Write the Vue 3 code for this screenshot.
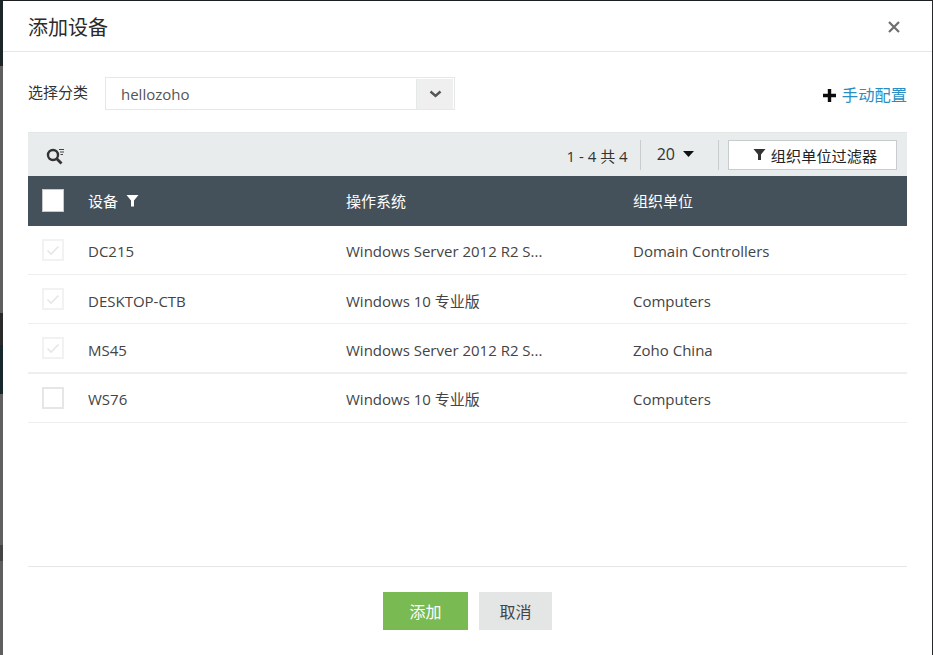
<script setup>
const rows = [
  { name: 'DC215', os: 'Windows Server 2012 R2 S...', ou: 'Domain Controllers', done: true, up: true },
  { name: 'DESKTOP-CTB', os: 'Windows 10 专业版', ou: 'Computers', done: true },
  { name: 'MS45', os: 'Windows Server 2012 R2 S...', ou: 'Zoho China', done: true, thick: true },
  { name: 'WS76', os: 'Windows 10 专业版', ou: 'Computers', done: false, up: true }
]
</script>

<template>
  <div class="page">
    <div class="strip"></div>
    <div class="modal">
      <header class="head">
        <h1>添加设备</h1>
        <svg class="close" width="12" height="12" viewBox="0 0 12 12"><path d="M1 1L11 11M11 1L1 11" stroke="#6e6e6e" stroke-width="2.2" fill="none"/></svg>
      </header>
      <div class="body">
        <div class="picker">
          <span class="label">选择分类</span>
          <div class="select">
            <span class="value">hellozoho</span>
            <span class="arrow">
              <svg width="13" height="8" viewBox="0 0 13 8"><path d="M1.5 1.5L6.5 6L11.5 1.5" stroke="#555" stroke-width="2.4" fill="none"/></svg>
            </span>
          </div>
          <a class="manual">
            <svg width="13" height="13" viewBox="0 0 13 13"><path d="M6.5 0V13M0 6.5H13" stroke="#0c0c0c" stroke-width="3.4"/></svg>
            <span>手动配置</span>
          </a>
        </div>
        <div class="toolbar">
          <svg class="search" width="19" height="18" viewBox="0 0 19 18">
            <circle cx="7" cy="8" r="5" fill="none" stroke="#333" stroke-width="2.4"/>
            <path d="M10.5 11.5L15.5 16.5" stroke="#333" stroke-width="2.8"/>
            <path d="M13 2.5H18M14 5H18M14.5 7.5H17" stroke="#444" stroke-width="1.2"/>
          </svg>
          <span class="count">1 - 4 共 4</span>
          <span class="sep"></span>
          <span class="size">20</span>
          <svg class="caret" width="11" height="6" viewBox="0 0 11 6"><path d="M0 0H11L5.5 6Z" fill="#111"/></svg>
          <span class="sep sep2"></span>
          <button class="filter">
            <svg width="13" height="13" viewBox="0 0 13 13"><path d="M0.5 1H12.5L8 6.5V12L5 12V6.5Z" fill="#333"/></svg>
            <span>组织单位过滤器</span>
          </button>
        </div>
        <div class="thead">
          <span class="c-check"><span class="hbox"></span></span>
          <span class="c-name">设备
            <svg width="13" height="13" viewBox="0 0 13 13"><path d="M0.5 1H12.5L8 6.5V12.5L5 12.5V6.5Z" fill="#fff"/></svg>
          </span>
          <span class="c-os">操作系统</span>
          <span class="c-ou">组织单位</span>
        </div>
        <div v-for="r in rows" :key="r.name" class="row" :class="{ thick: r.thick, up: r.up }">
          <span class="c-check">
            <span class="box" :class="{ done: r.done }">
              <svg v-if="r.done" width="14" height="11" viewBox="0 0 14 11"><path d="M1.5 5.5L5 9L12.5 1.5" stroke="#e6e6e6" stroke-width="1.6" fill="none"/></svg>
            </span>
          </span>
          <span class="c-name">{{ r.name }}</span>
          <span class="c-os">{{ r.os }}</span>
          <span class="c-ou">{{ r.ou }}</span>
        </div>
        <div class="spacer"></div>
        <footer class="foot">
          <button class="add">添加</button>
          <button class="cancel">取消</button>
        </footer>
      </div>
    </div>
    <div class="edge"></div>
  </div>
</template>

<style>
html, body { margin: 0; background: #fff; }
</style>

<style scoped>
.page {
  display: flex;
  width: 933px;
  height: 655px;
  overflow: hidden;
  font-family: "Open Sans", "Noto Sans CJK SC", sans-serif;
  color: #333;
  background: #1c1f22;
}
.strip {
  width: 3px;
  flex: none;
  margin-top: 1px;
  background: linear-gradient(to bottom, #1c2527 0 65px, #5f5f5f 65px 312px, #2a2a2a 312px 344px, #18272b 344px 393px, #606060 393px 544px, #444 544px 560px, #5f5f5f 560px);
}
.modal {
  flex: 1;
  margin-top: 1px;
  display: flex;
  flex-direction: column;
  background: #fff;
  min-width: 0;
}
.edge { width: 1px; flex: none; background: #26292b; }
.head {
  flex: none;
  display: flex;
  align-items: center;
  justify-content: space-between;
  padding: 1px 32px 0 25px;
  height: 49px;
  border-bottom: 1px solid #e6e6e6;
}
h1 { margin: 0; font-size: 20px; font-weight: 400; color: #2b2b2b; }
.close { margin-top: 1px; }
.body {
  flex: 1;
  display: flex;
  flex-direction: column;
  padding: 0 25px;
}
.picker {
  height: 80px;
  flex: none;
  display: flex;
  align-items: flex-start;
  padding-top: 25px;
  box-sizing: border-box;
}
.label { width: 77px; font-size: 15px; line-height: 30px; color: #333; }
.select {
  width: 350px;
  height: 33px;
  box-sizing: border-box;
  border: 1px solid #e4e8e8;
  display: flex;
  justify-content: space-between;
  align-items: center;
}
.value { padding-left: 15px; font-size: 15px; color: #555; }
.arrow {
  width: 37px;
  height: 30px;
  margin-right: 1px;
  background: #efefef;
  border-left: 1px solid #e4e8e8;
  display: flex;
  align-items: center;
  justify-content: center;
  box-sizing: border-box;
}
.manual {
  margin-left: auto;
  margin-top: 8px;
  display: flex;
  align-items: center;
  gap: 6px;
  font-size: 16.3px;
  line-height: 20px;
  color: #2a8ec2;
}
.toolbar {
  height: 44px;
  flex: none;
  display: flex;
  align-items: center;
  background: #e9eced;
  box-sizing: border-box;
  border-top: 1px solid #e2e6e6;
  padding: 0 10px 0 18px;
}
.search { margin-top: 2px; }
.count { margin-left: auto; font-size: 15px; line-height: 20px; color: #333; margin-top: 2px; }
.sep { width: 1px; height: 30px; background: #c8cccc; margin-left: 12px; }
.size { margin-left: 16px; font-size: 16px; line-height: 20px; color: #333; margin-top: -2px; }
.caret { margin-left: 8px; margin-top: -1px; }
.sep2 { margin-left: 24px; }
.filter {
  margin-left: 9px;
  width: 169px;
  height: 30px;
  box-sizing: border-box;
  border: 1px solid #c8cccc;
  background: #fff;
  display: flex;
  align-items: center;
  justify-content: center;
  gap: 5px;
  padding: 0 0 0 5px;
  font: inherit;
  font-size: 15.2px;
  color: #222;
}
.thead, .row {
  display: flex;
  align-items: center;
  flex: none;
  font-size: 15px;
  line-height: 20px;
}
.thead { height: 50px; background: #44515a; color: #fff; padding-bottom: 1px; box-sizing: border-box; }
.row { height: 49px; border-bottom: 1px solid #eeeeee; box-sizing: border-box; color: #444; }
.row.thick { height: 50px; border-bottom-width: 2px; }
.row .c-name, .row .c-os, .row .c-ou { margin-top: 3px; }
.row.up .c-name, .row.up .c-os, .row.up .c-ou { margin-top: 1px; }
.row.thick .c-name, .row.thick .c-os, .row.thick .c-ou { margin-top: 4px; }
.c-check { width: 60px; padding-left: 14px; box-sizing: border-box; display: flex; }
.c-name { width: 258px; display: flex; align-items: center; gap: 8px; }
.c-os { width: 287px; }
.c-ou { flex: 1; }
.hbox {
  width: 22px;
  height: 23px;
  background: #fff;
  border: 1px solid #c9c9c9;
  box-sizing: border-box;
}
.box {
  width: 22px;
  height: 22px;
  box-sizing: border-box;
  border: 2px solid #e6e6e6;
  display: flex;
  align-items: center;
  justify-content: center;
}
.box.done { border-color: #f2f2f2; }
.spacer { flex: 1; }
.foot {
  height: 89px;
  flex: none;
  box-sizing: border-box;
  border-top: 1px solid #e6e6e6;
  display: flex;
  justify-content: center;
  gap: 11px;
  padding: 25px 0 0 0;
}
.foot button {
  height: 38px;
  border: 0;
  padding: 0;
  font: inherit;
  font-size: 16px;
}
.add { width: 85px; background: #7aba52; color: #fff; }
.cancel { width: 73px; background: #e4e5e5; color: #444; }
</style>
